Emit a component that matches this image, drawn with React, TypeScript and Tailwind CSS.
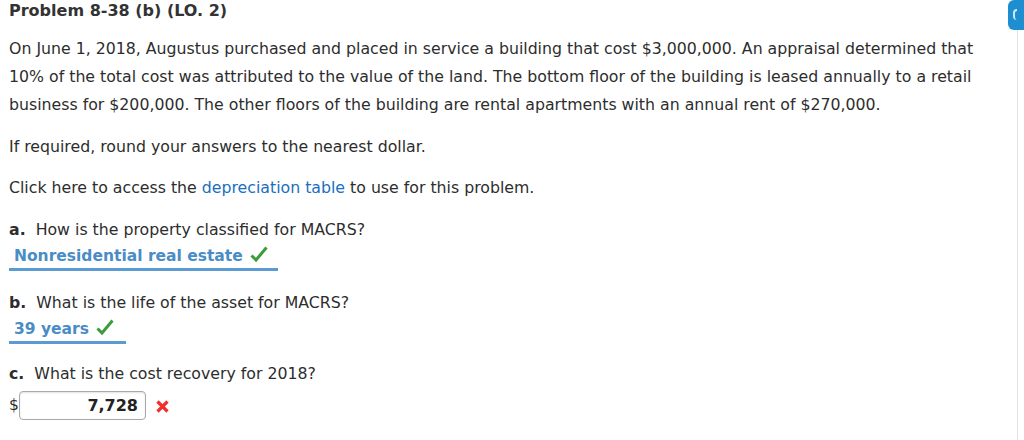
import React from 'react';

const font = { fontFamily: '"DejaVu Sans", Verdana, sans-serif' };

const Check = () => (
  <svg width="18" height="17" viewBox="0 0 18 17" className="inline-block ml-[7px] -mt-[4px]">
    <path d="M1.5 9.5 L6 14 L16.5 1.5" fill="none" stroke="#3c9c3c" strokeWidth="3" strokeLinejoin="miter" />
  </svg>
);

const Cross = () => (
  <svg width="13" height="13" viewBox="0 0 13 13">
    <path d="M1.5 1.5 L11.5 11.5 M11.5 1.5 L1.5 11.5" stroke="#f0302a" strokeWidth="3.2" strokeLinecap="butt" />
  </svg>
);

export default function App() {
  return (
    <div className="relative w-[1024px] h-[440px] bg-white overflow-hidden text-[#2d2d2d]" style={font}>
      <div className="absolute top-0 right-0 w-[16px] h-[30px] rounded-l-[6px] bg-[#1d8fd1]">
        <div className="ml-[5px] mt-[9px] w-[4px] h-[11px] rounded-l-full border-l-2 border-t-2 border-white/80" />
      </div>
      <div className="absolute top-[30px] right-[6px] w-[1px] h-[410px] bg-[#e3e3e3]" />

      <div className="pl-[9px] pr-[30px]">
        <h1 className="text-[16px] font-bold leading-[22px] text-[#333]">Problem 8-38 (b) (LO. 2)</h1>

        <p className="mt-[13px] text-[15.75px] leading-[28px] whitespace-nowrap">
          On June 1, 2018, Augustus purchased and placed in service a building that cost $3,000,000. An appraisal determined that
          <br />
          10% of the total cost was attributed to the value of the land. The bottom floor of the building is leased annually to a retail
          <br />
          business for $200,000. The other floors of the building are rental apartments with an annual rent of $270,000.
        </p>

        <p className="mt-[14px] text-[15.75px] leading-[28px]">If required, round your answers to the nearest dollar.</p>

        <p className="mt-[13px] text-[15.75px] leading-[28px]">
          Click here to access the <span className="text-[#1a6fc0]">depreciation table</span> to use for this problem.
        </p>

        <div className="mt-[14px]">
          <p className="text-[15.75px] leading-[28px]">
            <span className="font-bold">a.</span>&nbsp; How is the property classified for MACRS?
          </p>
          <div className="inline-block mt-[-2px] pl-[5px] pr-[10px] border-b-[3px] border-[#5c9bd1] leading-[24px]">
            <span className="text-[15.5px] font-bold text-[#4a8cc6]">Nonresidential real estate</span>
            <Check />
          </div>
        </div>

        <div className="mt-[18px]">
          <p className="text-[15.75px] leading-[28px]">
            <span className="font-bold">b.</span>&nbsp; What is the life of the asset for MACRS?
          </p>
          <div className="inline-block mt-[-2px] pl-[5px] pr-[12px] border-b-[3px] border-[#5c9bd1] leading-[24px]">
            <span className="text-[15.5px] font-bold text-[#4a8cc6]">39 years</span>
            <Check />
          </div>
        </div>

        <div className="mt-[16px]">
          <p className="text-[15.75px] leading-[28px]">
            <span className="font-bold">c.</span>&nbsp; What is the cost recovery for 2018?
          </p>
          <div className="flex items-center mt-[3px]">
            <span className="text-[15.5px] w-[10px]">$</span>
            <div className="w-[127px] h-[29px] border border-[#a9a9a9] rounded-[4px] flex items-center justify-end pr-[7px] shadow-[inset_0_1px_2px_rgba(0,0,0,0.12)]">
              <span className="text-[16px] font-bold text-[#222]">7,728</span>
            </div>
            <span className="ml-[10px] mt-[2px]"><Cross /></span>
          </div>
        </div>
      </div>
    </div>
  );
}
